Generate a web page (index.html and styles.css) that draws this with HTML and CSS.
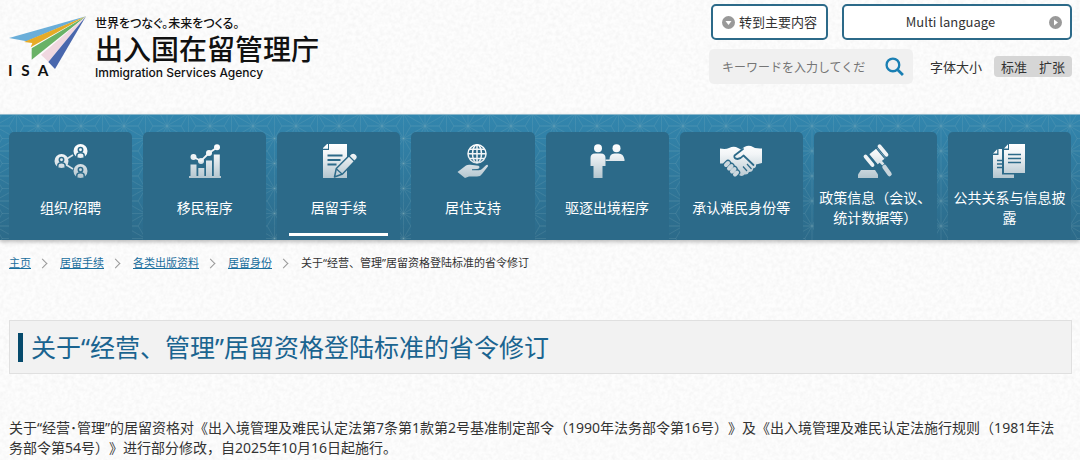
FILE: index.html
```
<!DOCTYPE html>
<html lang="zh-CN">
<head>
    <meta charset="UTF-8">
    <meta name="viewport" content="width=device-width, initial-scale=1.0">
    <title>关于“经营、管理”居留资格登陆标准的省令修订</title>
    <link rel="stylesheet" href="styles.css">
</head>
<body>

    <header class="header">
        <a class="logo" href="#">
            <svg class="logo-mark" viewBox="0 0 240 186" role="img" aria-label="ISA">
                <polygon fill="#6aaed9" points="3,66 56,76 234,1"/>
                <polygon fill="#e6ab27" points="48,78 73,81 68,94 234,1"/>
                <polygon fill="#69b266" points="71,97 71,131 234,1"/>
                <polygon fill="#f0d8e0" points="99,116 121,137 234,1"/>
                <polygon fill="#4967ad" points="121,138 141,159 234,1"/>
                <g class="logo-letters">
                    <text x="0" y="180">I</text>
                    <text x="40" y="180">S</text>
                    <text x="89" y="180">A</text>
                </g>
            </svg>
            <span class="logo-text">
                <span class="logo-catch">世界をつなぐ。未来をつくる。</span>
                <span class="logo-name">出入国在留管理庁</span>
                <span class="logo-en">Immigration Services Agency</span>
            </span>
        </a>

        <div class="tools">
            <div class="tools-row">
                <a class="tool-button skip" href="#main">
                    <svg class="round-icon" viewBox="0 0 13 13"><circle cx="6.5" cy="6.5" r="6.5" fill="#999"/><path d="M3.5 5h6l-3 4z" fill="#fff"/></svg>
                    转到主要内容
                </a>
                <button class="tool-button language" type="button">
                    <span>Multi language</span>
                    <svg class="round-icon" viewBox="0 0 13 13"><circle cx="6.5" cy="6.5" r="6.5" fill="#999"/><path d="M5 3.5v6l4-3z" fill="#fff"/></svg>
                </button>
            </div>
            <div class="tools-row">
                <form class="search">
                    <input type="text" aria-label="キーワード" placeholder="キーワードを入力してください">
                    <button type="submit" aria-label="検索">
                        <svg viewBox="0 0 18 18"><circle cx="7.5" cy="7.5" r="6" fill="none" stroke="#1a7fb3" stroke-width="2.2"/><path d="M12 12l5 5" stroke="#1a7fb3" stroke-width="2.6"/></svg>
                    </button>
                </form>
                <div class="font-size">
                    <span>字体大小</span>
                    <div class="font-size-buttons">
                        <button type="button">标准</button>
                        <button type="button">扩张</button>
                    </div>
                </div>
            </div>
        </div>
    </header>

    <nav class="nav">
        <svg class="defs" width="0" height="0" aria-hidden="true">
            <defs>
                <linearGradient id="silver" gradientUnits="userSpaceOnUse" x1="0" y1="0" x2="0" y2="34">
                    <stop offset="0" stop-color="#fff"/>
                    <stop offset="0.3" stop-color="#f2f5f7"/>
                    <stop offset="1" stop-color="#b4c6cf"/>
                </linearGradient>
            </defs>
        </svg>
        <ul class="nav-list">
            <li><a class="nav-item" href="#">
                <svg viewBox="0 0 34 34">
                    <g fill="url(#silver)">
                        <path d="M11 16l8-5M11 20l8 5" stroke="#dbe4e8" stroke-width="1.6"/>
                        <circle cx="7.5" cy="17" r="7"/>
                        <circle cx="26.5" cy="7" r="7"/>
                        <circle cx="26.5" cy="27" r="7"/>
                    </g>
                    <g fill="none" stroke="#2c6a89" stroke-width="1.5">
                        <circle cx="7.5" cy="15.7" r="2.2"/><path d="M3.8 23v-1.5q0-2.8 3.7-2.8t3.7 2.8V23"/>
                        <circle cx="26.5" cy="5.7" r="2.2"/><path d="M22.8 13v-1.5q0-2.8 3.7-2.8t3.7 2.8V13"/>
                        <circle cx="26.5" cy="25.7" r="2.2"/><path d="M22.8 33v-1.5q0-2.8 3.7-2.8t3.7 2.8V33"/>
                    </g>
                </svg>
                <span>组织/招聘</span>
            </a></li>
            <li><a class="nav-item" href="#">
                <svg viewBox="0 0 34 34">
                    <g fill="url(#silver)">
                        <path d="M1 32h1.5V20.5h6V32h1.8v-8h6v8H18V16.5h6V32h1.8V10.5h6V32H33v2H1z"/>
                        <circle cx="5.5" cy="13" r="3"/><circle cx="13" cy="17" r="3"/><circle cx="21" cy="9" r="3"/><circle cx="29" cy="3.2" r="3"/>
                    </g>
                    <path d="M5.5 13l7.5 4 8-8 8-5.5" fill="none" stroke="#f3f6f8" stroke-width="1.8"/>
                </svg>
                <span>移民程序</span>
            </a></li>
            <li><a class="nav-item current" href="#" aria-current="page">
                <svg viewBox="0 0 34 34">
                    <path d="M7 0h18v34H1V6h6zM1 4.800V4l4-4h1v4.800z" fill="url(#silver)"/>
                    <path d="M5.500 11.500h15M5.500 16h13M5.500 20.500h9" stroke="#2c6a89" stroke-width="1.800"/>
                    <path d="M12.500 33l1.800-8.500L29 9.800q2.300-2 5 .5t.6 5L20.500 30z" fill="url(#silver)" stroke="#2c6a89" stroke-width="1.500" stroke-linejoin="round"/>
                    <path d="M27 12l5.500 5.500M14.500 25l5.500 5" stroke="#2c6a89" stroke-width="1.200"/>
                </svg>
                <span>居留手续</span>
            </a></li>
            <li><a class="nav-item" href="#">
                <svg viewBox="0 0 34 34">
                    <g fill="none" stroke="url(#silver)" stroke-width="1.5">
                        <circle cx="21" cy="9.800" r="9"/>
                        <ellipse cx="21" cy="9.800" rx="4.500" ry="9"/>
                        <path d="M21 1v18M12 9.800h18M13.500 5.200h15M13.500 14.500h15" stroke="#f3f6f8"/>
                    </g>
                    <path d="M1.500 28l8.500-6.500q2-1.200 4.500-.7l8 1q1.500.8.8 2.200-.8 1-2.300 1l-5 .3v1h7q2.200 0 3.500-1.800L30 21.200q2-1 2 1L26 30q-1.500 2.500-5 2.500H13l-4 1.500z" fill="url(#silver)"/>
                </svg>
                <span>居住支持</span>
            </a></li>
            <li><a class="nav-item" href="#">
                <svg viewBox="0 0 34 34">
                    <g fill="url(#silver)">
                        <circle cx="8" cy="4.200" r="4"/>
                        <path d="M.5 14q0-4.500 4.500-4.500h6q4.500 0 4.500 4.500v8h-3v12h-9V22h-3z"/>
                        <circle cx="26.500" cy="4.200" r="4"/>
                        <path d="M19.500 15.500q0-6 5-6h4q5 0 6 6v1.500H15.500v-1.500z"/>
                    </g>
                </svg>
                <span>驱逐出境程序</span>
            </a></li>
            <li><a class="nav-item" href="#">
                <svg viewBox="0 0 42 34">
                    <path d="M0 4.500q6 1 9-.5 5-2.500 9 0l3 1.500q5-5 10-3.500 4 3 11 2.500V19l-6 1.500q.5 3.500-3 4 0 3.500-4 3.500-1 3-4.500 2.500-2 2.500-5.500.5L6 21l-2-1.500H0z" fill="url(#silver)"/>
                    <path d="M23 5l-8.500 6.500q-1 3 3 3.500 3.500-.5 6-3.500l10 9.500" fill="none" stroke="#2c6a89" stroke-width="1.800" stroke-linejoin="round" stroke-linecap="round"/>
                    <path d="M27 20l4.500 5M23 22.500l4 4.500" stroke="#2c6a89" stroke-width="1.200"/>
                    <g stroke-linecap="round">
                        <path d="M6 21l2-2M9 24.500l2.500-2.500M12 27.500l2.500-2.500M15 30.500l2-2" stroke="#2c6a89" stroke-width="6.500"/>
                        <path d="M6 21l2-2M9 24.500l2.500-2.500M12 27.500l2.500-2.500M15 30.500l2-2" stroke="#ccd8de" stroke-width="4"/>
                    </g>
                </svg>
                <span>承认难民身份等</span>
            </a></li>
            <li><a class="nav-item" href="#">
                <svg viewBox="0 0 34 34">
                    <g fill="url(#silver)">
                        <path d="M11 10.500l8-6.500 8.500 10-8 6.500z"/>
                        <path d="M3 26h14l3 4.500V34H0v-3.500z"/>
                    </g>
                    <path d="M10.300 10l9 11M18 3.800l9 10.800" stroke="#2c6a89" stroke-width="1.200"/>
                    <path d="M7.500 12.500l7 8.500M21.500 2.200l7 8.500" stroke="#eff3f5" stroke-width="3.800" stroke-linecap="round"/>
                    <path d="M22.500 17.500l2.800 3" stroke="#dbe4e8" stroke-width="2.800"/>
                    <path d="M26.500 23l5 7" stroke="#c7d4db" stroke-width="4.500" stroke-linecap="round"/>
                </svg>
                <span>政策信息（会议、统计数据等）</span>
            </a></li>
            <li><a class="nav-item" href="#">
                <svg viewBox="0 0 34 34">
                    <g fill="url(#silver)">
                        <path d="M6.500 5H10v25.500h12V34H1V11h5.500zM1 9.500l4.200-4.300v4.300z"/>
                        <path d="M17 0h16v29H12V6h5zM12 4.500L16 .3v4.200z"/>
                    </g>
                    <path d="M16 10.500h13M16 14.500h13M16 18.500h13M5 16.500h5M5 20h5M5 23.500h5" stroke="#2c6a89" stroke-width="1.600"/>
                </svg>
                <span>公共关系与信息披露</span>
            </a></li>
        </ul>
    </nav>

    <ol class="breadcrumb">
        <li><a href="#">主页</a></li>
        <li><a href="#">居留手续</a></li>
        <li><a href="#">各类出版资料</a></li>
        <li><a href="#">居留身份</a></li>
        <li>关于“经营、管理”居留资格登陆标准的省令修订</li>
    </ol>

    <main class="main" id="main">
        <h1>关于“经营、管理”居留资格登陆标准的省令修订</h1>
        <p>关于“经营･管理”的居留资格对《出入境管理及难民认定法第7条第1款第2号基准制定部令（1990年法务部令第16号）》及《出入境管理及难民认定法施行规则（1981年法务部令第54号）》进行部分修改，自2025年10月16日起施行。</p>
    </main>

</body>
</html>
```
FILE: styles.css
```
* {
    box-sizing: border-box;
}

body {
    margin: 0;
    color: #333;
    font-family: "Noto Sans", "Noto Sans CJK JP", "Noto Sans CJK SC", sans-serif;
    font-size: 14px;
    line-height: 20px;
    text-spacing-trim: space-all;
    background-color: #fdfdfd;
    /* paper texture */
    background-image: url("data:image/svg+xml,%3Csvg xmlns='http://www.w3.org/2000/svg' width='200' height='200'%3E%3Cfilter id='n'%3E%3CfeTurbulence type='fractalNoise' baseFrequency='.25' numOctaves='2' stitchTiles='stitch'/%3E%3CfeColorMatrix values='0 0 0 0 0 0 0 0 0 0 0 0 0 0 0 .06 0 0 0 -.02'/%3E%3C/filter%3E%3Crect width='200' height='200' filter='url(%23n)'/%3E%3C/svg%3E");
}

a {
    color: #1a6f9e;
}

button,
input {
    font: inherit;
    color: inherit;
    border: none;
    background: none;
    padding: 0;
}

button {
    cursor: pointer;
}

/* header */
.header {
    display: flex;
    justify-content: space-between;
    align-items: flex-start;
    min-height: 114px;
    padding: 4px 8px 0;
}

.logo {
    display: flex;
    gap: 7px;
    padding-top: 12px;
    color: #111;
    text-decoration: none;
}

.logo-mark {
    width: 80px;
    height: 62px;
}

.logo-letters {
    font-family: Lato, sans-serif;
    font-size: 46px;
    font-weight: bold;
    fill: #111;
}

.logo-text {
    display: flex;
    flex-direction: column;
    font-family: "Noto Sans CJK JP", sans-serif;
}

.logo-catch {
    font-size: 12px;
    font-weight: 500;
    line-height: 14px;
    font-feature-settings: "palt";
}

.logo-name {
    font-size: 28px;
    font-weight: 500;
    line-height: 36px;
}

.logo-en {
    font-family: Inter, sans-serif;
    font-size: 12px;
    font-weight: 500;
    line-height: 14px;
}

.tools {
    display: flex;
    flex-direction: column;
    gap: 9px;
    font-family: "Noto Sans CJK JP", "Noto Sans CJK SC", sans-serif;
    font-size: 13px;
}

.tools-row {
    display: flex;
    justify-content: space-between;
    align-items: center;
    gap: 14px;
}

.tool-button {
    display: flex;
    align-items: center;
    height: 36px;
    border: 2px solid #2c6a89;
    border-radius: 5px;
    background-color: #fff;
    color: #333;
    text-decoration: none;
}

.skip {
    gap: 4px;
    margin-left: auto;
    padding: 0 9px;
}

.language {
    width: 230px;
    padding: 0 8px;
}

.language span {
    flex: 1;
}

.round-icon {
    width: 13px;
    height: 13px;
}

.search {
    display: flex;
    align-items: center;
    gap: 20px;
    height: 35px;
    margin-right: 3px;
    padding: 0 9px 0 13px;
    border-radius: 5px;
    background-color: #f0f0f0;
}

.search input {
    width: 143px;
    font-size: 12px;
}

.search input::placeholder {
    color: #757575;
}

.search button,
.search svg {
    display: block;
    width: 19px;
    height: 19px;
}

.font-size {
    display: flex;
    align-items: center;
    gap: 12px;
}

.font-size-buttons {
    display: flex;
    gap: 12px;
    padding: 0 7px;
    border-radius: 4px;
    background-color: #d6d6d6;
}

.font-size-buttons button {
    line-height: 21px;
}

/* main navigation */
.nav {
    padding: 17px 9px 0;
    border-top: 1px solid #8db8cc;
    box-shadow: 0 2px 4px rgba(0, 0, 0, 0.25);
    background-image:
        url("data:image/svg+xml,%3Csvg xmlns='http://www.w3.org/2000/svg' width='43' height='25' viewBox='0 0 42 24'%3E%3Cpath d='M0 0v24M21 0v24M42 0v24M0 0l42 24M42 0L0 24M0 0h14M28 0h14M0 24h14M28 24h14M7 12h28M0 0l7 12L0 24M42 0l-7 12 7 12M21 12L14 0M21 12L28 0M21 12l-7 12M21 12l7 12' fill='none' stroke='%2396b8c0' stroke-opacity='.2' stroke-width='.8'/%3E%3C/svg%3E"),
        linear-gradient(#3286ae, #2c6a89);
    background-position: 38px 11px, 0 0;
}

.defs {
    position: absolute;
}

.nav-list {
    display: grid;
    grid-template-columns: repeat(8, 1fr);
    gap: 11px;
    margin: 0;
    padding: 0;
    list-style: none;
}

.nav-item {
    position: relative;
    display: flex;
    flex-direction: column;
    align-items: center;
    gap: 10px;
    height: 108px;
    padding: 12px 4px;
    border-radius: 5px 5px 0 0;
    background-color: #2c6a89;
    color: #fff;
    text-align: center;
    text-decoration: none;
}

.nav-item svg {
    height: 34px;
    overflow: visible;
}

.nav-item span {
    display: flex;
    align-items: center;
    min-height: 40px;
}

.nav-item.current::after {
    content: "";
    position: absolute;
    right: 12px;
    bottom: 4px;
    left: 12px;
    height: 3px;
    background-color: #fff;
}

/* breadcrumb */
.breadcrumb {
    display: flex;
    margin: 13px 9px 0;
    padding: 0;
    list-style: none;
    font-size: 11px;
}

.breadcrumb li {
    display: flex;
    align-items: center;
}

.breadcrumb li + li::before {
    content: "";
    width: 6px;
    height: 6px;
    margin: 0 14px 0 8px;
    border-top: 1px solid #999;
    border-right: 1px solid #999;
    transform: rotate(45deg);
}

/* content */
.main {
    padding: 47px 8px 0 9px;
}

.main h1 {
    display: flex;
    align-items: center;
    gap: 8px;
    margin: 0;
    padding: 8px;
    border: 1px solid #e0e0e0;
    background-color: #f2f2f2;
    color: #1a6490;
    font-size: 25px;
    font-weight: normal;
    line-height: 36px;
}

.main h1::before {
    content: "";
    width: 5px;
    height: 29px;
    background-color: #064a6c;
}

.main p {
    margin: 44px 0 0;
    padding-right: 8px;
}
```
